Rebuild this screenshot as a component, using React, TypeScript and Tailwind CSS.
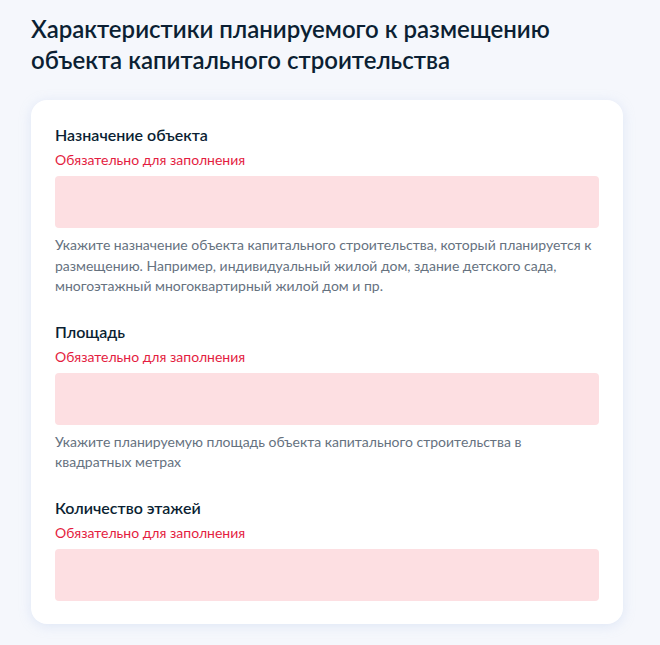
export default function App() {
  const fields = [
    {
      label: 'Назначение объекта',
      help: 'Укажите назначение объекта капитального строительства, который планируется к размещению. Например, индивидуальный жилой дом, здание детского сада, многоэтажный многоквартирный жилой дом и пр.',
    },
    {
      label: 'Площадь',
      help: 'Укажите планируемую площадь объекта капитального строительства в квадратных метрах',
    },
    {
      label: 'Количество этажей',
      help: '',
    },
  ];

  return (
    <main className="min-h-screen bg-[#f5f7fc] pl-[31px] pt-[13px] pb-6 font-['Lato','Liberation_Sans',sans-serif]">
      <h1 className="text-[24px] leading-[31px] font-semibold text-[#0b1f33] w-[560px]">
        Характеристики планируемого к размещению объекта капитального строительства
      </h1>

      <div className="mt-[25px] w-[592px] bg-white rounded-2xl px-6 pt-[23px] pb-[23px] shadow-[0_2px_12px_rgba(180,200,235,0.35)] flex flex-col gap-[23px]">
        {fields.map((f) => (
          <div key={f.label}>
            <p className="text-[16px] leading-6 font-semibold text-[#0b1f33]">{f.label}</p>
            <p className="mt-[3px] text-[14px] leading-5 text-[#e41d3f]">Обязательно для заполнения</p>
            <div className="mt-[6px] h-[52px] rounded bg-[#fddfe2]" />
            {f.help && (
              <p className="mt-[7px] text-[14px] leading-[20.5px] text-[#66727f]">{f.help}</p>
            )}
          </div>
        ))}
      </div>
    </main>
  );
}
